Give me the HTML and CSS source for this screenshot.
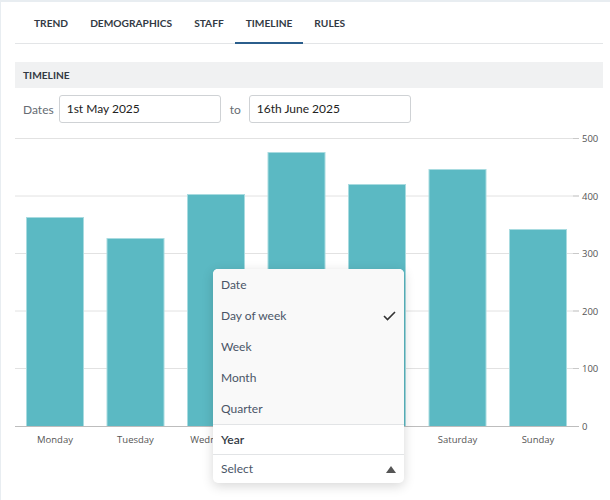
FILE: index.html
```html
<!DOCTYPE html>
<html>
<head>
<meta charset="utf-8">
<link rel="stylesheet" href="styles.css">
</head>
<body>
<div class="panel">
  <nav class="tabs">
    <div class="tab">TREND</div>
    <div class="tab">DEMOGRAPHICS</div>
    <div class="tab">STAFF</div>
    <div class="tab active">TIMELINE</div>
    <div class="tab">RULES</div>
  </nav>
  <div class="section-head">TIMELINE</div>
  <div class="dates">
    <span class="lbl">Dates</span>
    <div class="input">1st May 2025</div>
    <span class="lbl to">to</span>
    <div class="input">16th June 2025</div>
  </div>
  <div class="chart">
    <svg class="chart-svg" width="595" height="320" viewBox="0 0 595 320">
      <g class="grid">
        <line x1="0" y1="7.5" x2="564" y2="7.5"/>
        <line x1="0" y1="65" x2="564" y2="65"/>
        <line x1="0" y1="122.5" x2="564" y2="122.5"/>
        <line x1="0" y1="180" x2="564" y2="180"/>
        <line x1="0" y1="237.5" x2="564" y2="237.5"/>
      </g>
      <g class="ticks">
        <line x1="558" y1="7.5" x2="564" y2="7.5"/>
        <line x1="558" y1="65" x2="564" y2="65"/>
        <line x1="558" y1="122.5" x2="564" y2="122.5"/>
        <line x1="558" y1="180" x2="564" y2="180"/>
        <line x1="558" y1="237.5" x2="564" y2="237.5"/>
        <line x1="558" y1="295.5" x2="564" y2="295.5"/>
      </g>
      <g class="ylab">
        <text x="567" y="11">500</text>
        <text x="567" y="68.5">400</text>
        <text x="567" y="126">300</text>
        <text x="567" y="183.5">200</text>
        <text x="567" y="241">100</text>
        <text x="567" y="299">0</text>
      </g>
      <g class="bars">
        <rect x="11.5" y="86.5" width="57" height="209"/>
        <rect x="92" y="107.5" width="57" height="188"/>
        <rect x="172.5" y="63.5" width="57" height="232"/>
        <rect x="253" y="21.5" width="57" height="274"/>
        <rect x="333.5" y="53.5" width="57" height="242"/>
        <rect x="414" y="38.5" width="57" height="257"/>
        <rect x="494.5" y="98.5" width="57" height="197"/>
      </g>
      <line class="base" x1="0" y1="295.5" x2="564" y2="295.5"/>
      <g class="xlab">
        <text x="40" y="312">Monday</text>
        <text x="120.5" y="312">Tuesday</text>
        <text x="201" y="312">Wednesday</text>
        <text x="281.5" y="312">Thursday</text>
        <text x="362" y="312">Friday</text>
        <text x="442.5" y="312">Saturday</text>
        <text x="523" y="312">Sunday</text>
      </g>
    </svg>
  </div>
  <div class="dropdown">
    <ul class="options">
      <li>Date</li>
      <li class="checked">Day of week
        <svg class="check" width="13" height="10" viewBox="0 0 13 10"><polyline points="1,5 4.5,8.5 12,1"/></svg>
      </li>
      <li>Week</li>
      <li>Month</li>
      <li>Quarter</li>
    </ul>
    <div class="year">Year</div>
    <div class="select">Select<span class="caret"></span></div>
  </div>
</div>
</body>
</html>
```

FILE: styles.css
```css
html, body {
  margin: 0;
  padding: 0;
}
body {
  background: #e8edf1;
  width: 610px;
  height: 500px;
  overflow: hidden;
  font-family: "Lato", "Noto Sans", sans-serif;
}
.panel {
  position: relative;
  margin: 2px 0 0 1px;
  background: #fff;
  height: 498px;
  padding: 0 7px 0 14px;
  box-sizing: border-box;
}
.tabs {
  display: flex;
  height: 41px;
  border-bottom: 1px solid #e3e5e7;
  padding-left: 8px;
}
.tab {
  padding: 0 11px;
  font-size: 10.2px;
  font-weight: 700;
  color: #333a44;
  line-height: 42px;
  box-sizing: border-box;
}
.tab.active {
  border-bottom: 2px solid #2b5e8c;
  height: 42px;
}
.section-head {
  margin-top: 18px;
  height: 26px;
  line-height: 26px;
  background: #f0f1f2;
  padding-left: 8px;
  font-size: 10.2px;
  font-weight: 700;
  color: #333a44;
}
.dates {
  display: flex;
  align-items: center;
  margin-top: 7px;
  padding-left: 8px;
  height: 28px;
}
.lbl {
  font-size: 12px;
  color: #666c73;
  margin-right: 5px;
}
.lbl.to {
  margin: 0 8px 0 9px;
}
.input {
  width: 162px;
  height: 28px;
  box-sizing: border-box;
  border: 1px solid #cfd2d5;
  border-radius: 3px;
  font-size: 12px;
  color: #222;
  line-height: 26px;
  padding-left: 7px;
}
.chart {
  margin-top: 8px;
}
.chart-svg {
  display: block;
}
.grid line {
  stroke: #e2e2e2;
  stroke-width: 1;
}
.ticks line {
  stroke: #c9c9c9;
  stroke-width: 1;
}
.base {
  stroke: #bdbdbd;
  stroke-width: 1;
}
.bars rect {
  fill: #5bb9c3;
  stroke: #a8dbe0;
  stroke-width: 1;
}
.ylab text {
  font-family: "Open Sans", sans-serif;
  font-size: 9.5px;
  fill: #555;
}
.xlab text {
  font-family: "Open Sans", sans-serif;
  font-size: 9.5px;
  fill: #555;
  text-anchor: middle;
}
.dropdown {
  position: absolute;
  left: 212px;
  top: 267px;
  width: 191px;
  background: #fff;
  border-radius: 5px;
  box-shadow: 0 3px 12px rgba(0, 0, 0, 0.16);
  overflow: hidden;
}
.options {
  list-style: none;
  margin: 0;
  padding: 0;
  background: #f9f9f9;
  border-bottom: 1px solid #e2e4e6;
}
.options li {
  position: relative;
  height: 31px;
  line-height: 31px;
  padding-left: 8px;
  font-size: 12px;
  color: #4a5567;
}
.check {
  position: absolute;
  right: 8px;
  top: 11px;
}
.check polyline {
  fill: none;
  stroke: #333;
  stroke-width: 1.6;
}
.year {
  height: 29px;
  line-height: 29px;
  padding-left: 8px;
  font-size: 12px;
  font-weight: 600;
  color: #333a44;
  border-bottom: 1px solid #e2e4e6;
}
.select {
  position: relative;
  height: 28px;
  line-height: 28px;
  padding-left: 8px;
  font-size: 12px;
  color: #4a5567;
}
.caret {
  position: absolute;
  right: 8px;
  top: 11px;
  width: 0;
  height: 0;
  border-left: 5.5px solid transparent;
  border-right: 5.5px solid transparent;
  border-bottom: 7px solid #555;
}
```
